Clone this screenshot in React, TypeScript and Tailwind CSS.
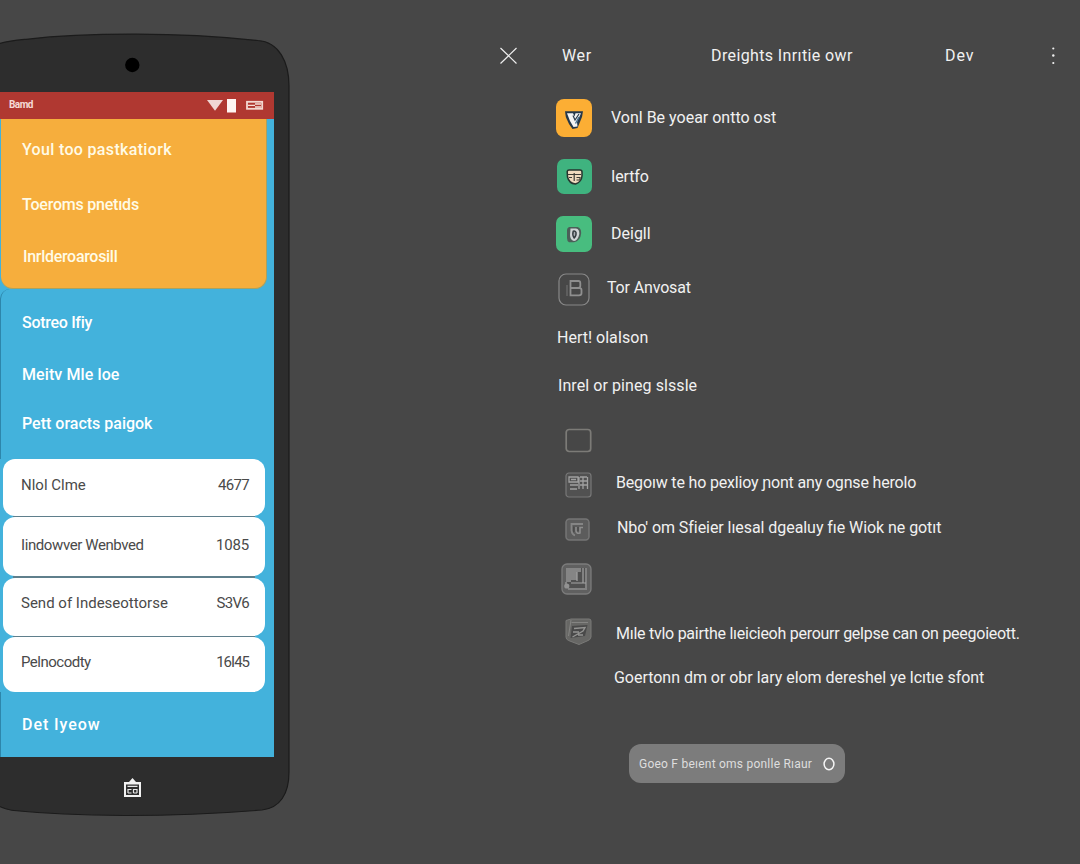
import React from "react";

type Line = { text: string; row: string; cls: string };

const orangeItems: Line[] = [
  { text: "Youl too pastkatiork", row: "h-[60px] pl-[21px] pt-[2px]", cls: "tracking-[0.33px]" },
  { text: "Toeroms pnetıds", row: "h-[50px] pl-[21px] pt-[2px]", cls: "tracking-[-0.22px]" },
  { text: "Inrlderoarosill", row: "h-[56px] pl-[22px]", cls: "tracking-[-0.3px]" },
];

const blueItems: Line[] = [
  { text: "Sotreo Ifiy", row: "h-[68px]", cls: "tracking-[-0.3px]" },
  { text: "Meitv Mle loe", row: "h-[36px]", cls: "tracking-[0.1px]" },
  { text: "Pett oracts paigok", row: "h-[62px]", cls: "" },
];

const cards = [
  { text: "Nlol Clme", value: "4677", box: "h-[57px] pb-[4px]", cls: "", num: "tracking-[-0.7px]" },
  { text: "Iindowver Wenbved", value: "1085", box: "h-[59px] pb-[4px]", cls: "tracking-[-0.4px]", num: "tracking-[-0.2px]" },
  { text: "Send of Indeseottorse", value: "S3V6", box: "h-[58px] pb-[6px]", cls: "", num: "tracking-[-0.7px]" },
  { text: "Pelnocodty", value: "16I45", box: "h-[55px] pb-[5px]", cls: "tracking-[-0.5px]", num: "tracking-[-1px]" },
];

function PhoneBody() {
  return (
    <svg className="absolute left-0 top-0" width="292" height="864" viewBox="0 0 292 864" fill="none">
      <path
        d="M-2 44 C8 41 14 40.5 26 39.3 C60 35.5 96 34.2 132 34.2 C180 34 225 37 258 40.5 C279 42 289 62 289 86 V772 C289 794 280 808 262 810 C215 814 170 815.5 125 815.5 C80 815 40 813 14 810.5 C8 810 4 808 -2 806 Z"
        fill="#2d2d2d"
        stroke="#1b1b1b"
        strokeWidth="1.2"
      />
      <circle cx="132.3" cy="65" r="7.2" fill="#000" />
    </svg>
  );
}

function StatusBar() {
  return (
    <div className="flex h-[27px] items-center justify-between bg-[#b03831] pl-[9px] pr-[10px]">
      <span className="mb-[3px] text-[10px] font-bold tracking-[-0.55px] text-[#f6dcd8]">Bamd</span>
      <svg className="mb-[2px]" width="58" height="16" viewBox="0 0 58 16" fill="none">
        <path d="M1 3H17L9 13.8Z" fill="#f0d6d3" />
        <rect x="21" y="2" width="9" height="13.5" fill="#fff5f2" />
        <rect x="41" y="4.8" width="15.2" height="7" stroke="#f3d9d2" strokeWidth="1.8" />
        <path d="M42 8.3H49M49 7H55M49 10H55" stroke="#f6dfd8" strokeWidth="1.3" />
      </svg>
    </div>
  );
}

function Phone() {
  return (
    <section className="relative h-[864px] w-[292px] shrink-0">
      <PhoneBody />
      <div className="relative flex h-full flex-col items-start pt-[92px]">
        <div className="flex h-[665px] w-[274px] flex-col bg-[#43b2dc]">
          <StatusBar />
          <div className="ml-px h-[170px] w-[266px] rounded-b-[12px] border-b border-r border-[#a9a261] bg-[#f6ae3d] text-[16px] font-medium text-[#fffbe6]">
            {orangeItems.map((i) => (
              <div key={i.text} className={`flex items-center ${i.row}`}>
                <span className={`whitespace-nowrap ${i.cls}`}>{i.text}</span>
              </div>
            ))}
          </div>
          <div className="h-[170px] rounded-tl-[10px] border-l border-[#2d86ab] pl-[21px] text-[16px] font-medium text-white">
            {blueItems.map((i) => (
              <div key={i.text} className={`flex items-center ${i.row}`}>
                <span className={`whitespace-nowrap ${i.cls}`}>{i.text}</span>
              </div>
            ))}
          </div>
          <div className="ml-[3px] flex w-[262px] flex-col text-[15px] text-[#4a4a4a]">
            {cards.map((c, n) => (
              <React.Fragment key={c.text}>
                {n > 0 && <div className="mx-[10px] h-[1.3px] bg-[#5f7f8c]" />}
                <div className={`flex items-center justify-between rounded-[12px] bg-white pl-[18px] pr-[16px] ${c.box}`}>
                  <span className={`whitespace-nowrap ${c.cls}`}>{c.text}</span>
                  <span className={`whitespace-nowrap ${c.num}`}>{c.value}</span>
                </div>
              </React.Fragment>
            ))}
          </div>
          <div className="flex flex-1 items-center border-l border-[#2d86ab] pl-[21px] pt-[2px] text-[16px] font-medium text-white">
            <span className="tracking-[0.95px]">Det Iyeow</span>
          </div>
        </div>
        <svg className="ml-[123px] mt-[21px]" width="19" height="20" viewBox="0 0 19 20" fill="none">
          <path d="M9.5 0L13 4H18V19H1V4H6Z" fill="#f2f2f2" />
          <path d="M3 6.5H16V17H3Z" fill="#2d2d2d" />
          <path d="M4.5 8.3H14.5M5 11.5H8.5M5 15H8.5M5 11V15M10.5 11.5H14M10.5 15H14M10.5 11V15M14 11V15" stroke="#e8e8e8" strokeWidth="1.2" />
        </svg>
      </div>
    </section>
  );
}

function ShieldV() {
  return (
    <svg width="20" height="20" viewBox="0 0 20 20" fill="none">
      <path d="M1 1.2H19L18 7L13.5 18L8.5 19L5 14L1.8 7Z" fill="#26384a" />
      <path d="M3 3.2H9L10.5 6.5L11.5 3.2H17L13 12L13.5 16.5L9.5 17L6 11Z" fill="#f4f4f4" />
      <path d="M9 5.5L11 10L15 4" stroke="#26384a" strokeWidth="1.2" />
      <path d="M11.5 13.5L15 7" stroke="#4b7494" strokeWidth="1.4" />
    </svg>
  );
}

function ShieldFace() {
  return (
    <svg width="17" height="16" viewBox="0 0 17 16" fill="none">
      <path d="M1.2 2.5Q1.5 1 3 1H14Q16 1 16 3V7Q15.5 13 9.5 15Q3 14.5 1.5 8Z" fill="#efd9bd" stroke="#26352f" strokeWidth="1.5" />
      <path d="M2 5.5H15M8.2 4V12M3 8.5H6M10.5 8.5H14V11H10.5" stroke="#3b3b35" strokeWidth="1.2" />
    </svg>
  );
}

function BadgeZero() {
  return (
    <svg width="16" height="17" viewBox="0 0 16 17" fill="none">
      <path d="M3 1H11.5Q15.2 2 15.2 7Q14.5 15 8 16.3H3Q1 15 1 12V4Q1 2 3 1Z" fill="#4b5f58" />
      <path d="M4.5 2.5H10Q13.6 3 13.3 8Q12 14.5 8 15Q4 14 4 9Z" fill="#cfd3d6" />
      <path d="M7.2 5.2Q6 9 8.2 12Q10.5 10 10 6.3Q9 4.5 7.2 5.2Z" fill="#a8adb3" stroke="#333b40" strokeWidth="1.4" />
    </svg>
  );
}

function OutlineB() {
  return (
    <svg width="32" height="33" viewBox="0 0 32 33" fill="none">
      <rect x="1" y="1" width="30" height="31" rx="7" stroke="#888" strokeWidth="1.2" />
      <path d="M12.5 8H20.5Q22.3 8 22.3 10V13Q22.3 15 20 15H12.5ZM12.5 15H21.5Q23.5 15 23.5 17V20.3Q23.5 22.3 21 22.3H12.5Z" stroke="#8f8f8f" strokeWidth="1.8" />
      <path d="M9 12V23" stroke="#777" strokeWidth="1" />
    </svg>
  );
}

function EmptyBox() {
  return (
    <svg width="27" height="26" viewBox="0 0 27 26" fill="none">
      <rect x="1.2" y="1.5" width="24.5" height="22" rx="3" stroke="#7c7b77" strokeWidth="1.7" />
    </svg>
  );
}

function GridBox() {
  return (
    <svg width="27" height="26" viewBox="0 0 27 26" fill="none">
      <rect x="1" y="1" width="25" height="24" rx="3" fill="#515151" stroke="#787878" strokeWidth="1.2" />
      <path d="M4 5H13V10H4ZM5 13H13M5 17H12M14 5V17M18 5V17M22.5 5V17M15 5H22M15 9H22M15 13H22M6 7.5H11" stroke="#a0a0a0" strokeWidth="1.3" />
    </svg>
  );
}

function LetterBox() {
  return (
    <svg width="25" height="23" viewBox="0 0 25 23" fill="none">
      <rect x="1" y="1" width="23" height="21" rx="3.5" fill="#5c5c5c" stroke="#757575" strokeWidth="1.5" />
      <path d="M18 6H6.5V12.5Q7 16.5 10 17.5" stroke="#858585" strokeWidth="1.8" />
      <path d="M11 9V13Q11.5 16 15 15V9.5H18" stroke="#8d8d8d" strokeWidth="1.6" />
      <path d="M8.8 8.5V14M13 9V13" stroke="#484848" strokeWidth="1.3" />
    </svg>
  );
}

function ImageBox() {
  return (
    <svg width="31" height="32" viewBox="0 0 31 32" fill="none">
      <rect x="1" y="1" width="29" height="30" rx="5" fill="#606060" stroke="#7c7c7c" strokeWidth="1.3" />
      <path d="M5 5H26V25H5Z" fill="#505050" />
      <path d="M5 5H20V9H16V17H10V19H6V25H4V19H5Z" fill="#858585" />
      <path d="M22 5V20M25 5V25M10 20H25M7 26H26M16 9V18" stroke="#a3a3a3" strokeWidth="1.2" />
      <circle cx="5.8" cy="23" r="2.6" fill="#929292" />
    </svg>
  );
}

function NoteShield() {
  return (
    <svg width="27" height="27" viewBox="0 0 27 27" fill="none">
      <path d="M1 2.5L6 1H24Q26 1 26 3V19Q25.5 22 22 23L14 26.5L3.5 22.5Q1 21.5 1 19Z" fill="#676765" stroke="#7a7a78" strokeWidth="1" />
      <path d="M7 8L22.5 7L20 18L5.5 20Z" fill="#494949" />
      <path d="M9 10.5L20 9.5L18 13L7.5 19M8 14H14M13 17H18" stroke="#949492" strokeWidth="1.4" />
      <path d="M6 2L3.5 18M6.5 4.5H23" stroke="#858583" strokeWidth="1" />
    </svg>
  );
}

type Entry = { row: string; iconCol: string; icon: React.ReactNode; text: string; cls: string };

const entries: Entry[] = [
  {
    row: "h-[60px]",
    iconCol: "w-[55px]",
    icon: <div className="flex h-[38px] w-[36px] items-center justify-center rounded-[8px] bg-[#fcae34] pt-[3px]"><ShieldV /></div>,
    text: "Vonl Be yoear ontto ost",
    cls: "",
  },
  {
    row: "h-[58px]",
    iconCol: "w-[55px] pl-px pb-px",
    icon: <div className="flex size-[35px] items-center justify-center rounded-[7px] bg-[#3fb37f]"><ShieldFace /></div>,
    text: "Iertfo",
    cls: "tracking-[-0.15px]",
  },
  {
    row: "h-[55px]",
    iconCol: "w-[55px] pt-px",
    icon: <div className="flex size-[36px] items-center justify-center rounded-[7px] bg-[#48bd7f]"><BadgeZero /></div>,
    text: "Deigll",
    cls: "",
  },
  { row: "h-[53px]", iconCol: "w-[51px] pl-[2px] pt-[3px]", icon: <OutlineB />, text: "Tor Anvosat", cls: "tracking-[-0.15px]" },
  { row: "h-[48px]", iconCol: "w-px", icon: null, text: "Hert! olaIson", cls: "" },
  { row: "h-[47px]", iconCol: "w-[2px]", icon: null, text: "Inrel or pineg slssle", cls: "tracking-[0.08px]" },
  { row: "h-[64px]", iconCol: "w-[60px] pl-[9px]", icon: <EmptyBox />, text: "", cls: "" },
  { row: "h-[20px]", iconCol: "w-[60px] pl-[9px] pt-[4px]", icon: <GridBox />, text: "Begoıw te ho pexlioy ɲont any ognse herolo", cls: "tracking-[-0.17px]" },
  { row: "h-[70px]", iconCol: "w-[61px] pl-[9px] pt-[2px]", icon: <LetterBox />, text: "Nbo' om Sfieier lıesal dgealuy fıe Wiok ne gotıt", cls: "tracking-[-0.06px]" },
  { row: "h-[35px]", iconCol: "w-[61px] pl-[5px] pb-[3px]", icon: <ImageBox />, text: "", cls: "" },
  { row: "h-[72px]", iconCol: "w-[60px] pl-[9px] pb-[5px]", icon: <NoteShield />, text: "Mıle tvlo pairthe lıeicieoh perourr gelpse can on peegoieott.", cls: "tracking-[-0.26px]" },
  { row: "h-[16px]", iconCol: "w-[58px]", icon: null, text: "Goertonn dm or obr lary elom dereshel ye lcıtıe sfont", cls: "tracking-[-0.03px]" },
];

function Details() {
  return (
    <section className="flex h-[864px] flex-1 flex-col text-[16px] text-[#f1f1f1]">
      <header className="flex h-[88px] items-center pl-[207px] pt-[24px]">
        <svg className="mr-[44px]" width="19" height="18" viewBox="0 0 19 18" fill="none">
          <path d="M1.5 1L17.5 16.5M17.5 1L1.5 16.5" stroke="#eee" strokeWidth="1.2" />
        </svg>
        <span className="w-[149px] tracking-[0.6px]">Wer</span>
        <span className="w-[234px] whitespace-nowrap tracking-[0.38px]">Dreights Inrıtie owr</span>
        <span className="w-[106px] tracking-[0.9px]">Dev</span>
        <svg width="5" height="20" viewBox="0 0 5 20" fill="#f1f1f1">
          <circle cx="2.3" cy="2.5" r="1.1" />
          <circle cx="2.3" cy="9.5" r="1.2" />
          <circle cx="2.3" cy="17" r="1.1" />
        </svg>
      </header>
      <div className="flex flex-col pl-[264px]">
        {entries.map((e, n) => (
          <div key={n} className={`flex items-center ${e.row}`}>
            <div className={`shrink-0 ${e.iconCol}`}>{e.icon}</div>
            <span className={`whitespace-nowrap ${e.cls}`}>{e.text}</span>
          </div>
        ))}
      </div>
      <button className="ml-[337px] mt-[58px] flex h-[39px] w-[216px] items-center rounded-[12px] bg-[#7c7c7c] pl-[10px] text-[12px] text-[#dedede]">
        <span className="w-[184px] whitespace-nowrap pt-px text-left tracking-[0.23px]">Goeo F beıent oms ponlle Rıaur</span>
        <svg width="13" height="14" viewBox="0 0 13 14" fill="none">
          <ellipse cx="6" cy="7" rx="4.9" ry="5.8" stroke="#f4f4f4" strokeWidth="1.5" />
        </svg>
      </button>
    </section>
  );
}

export default function App() {
  return (
    <main className="flex h-[864px] w-[1080px] overflow-hidden bg-[#474747] font-[Roboto,'Liberation_Sans',sans-serif]">
      <Phone />
      <Details />
    </main>
  );
}
